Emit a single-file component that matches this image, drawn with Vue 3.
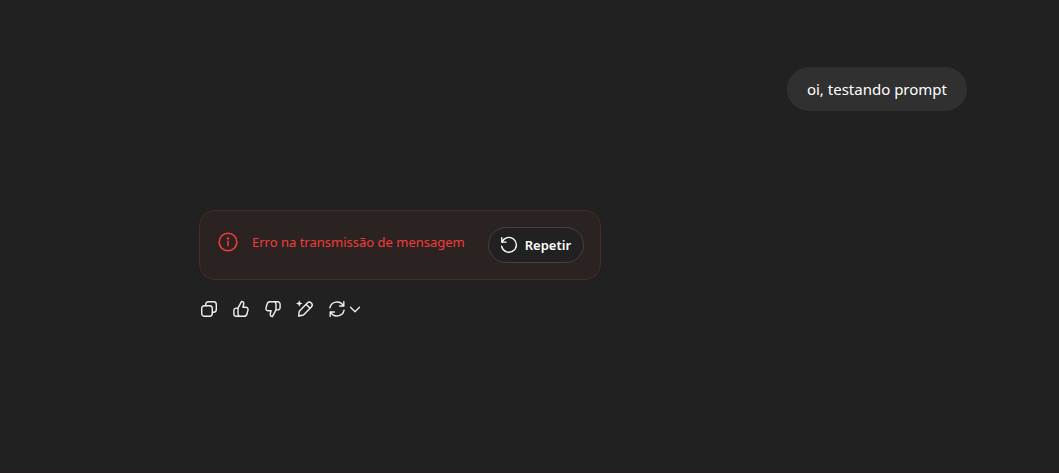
<script setup>
const userMessage = 'oi, testando prompt'
const errorMessage = 'Erro na transmissão de mensagem'

const actions = [
  {
    label: 'Copiar',
    paths: [
      'M5.4 6.7h5.2a2.7 2.7 0 0 1 2.7 2.7v5.2a2.7 2.7 0 0 1-2.7 2.7H5.4a2.7 2.7 0 0 1-2.7-2.7V9.4a2.7 2.7 0 0 1 2.7-2.7z',
      'M6.7 6.7V5.4a2.7 2.7 0 0 1 2.7-2.7h5.2a2.7 2.7 0 0 1 2.7 2.7v5.2a2.7 2.7 0 0 1-2.7 2.7h-1.3',
    ],
  },
  {
    label: 'Boa resposta',
    paths: [
      'M7 9.1 10.6 2.4c1.6 0 2.5 1.3 2.1 2.8L11.9 8.2h2.9c1.6 0 2.6 1.4 2.2 2.9l-1.1 3.9a2.9 2.9 0 0 1-2.8 2.3H5.4a2.5 2.5 0 0 1-2.5-2.5v-3.2a2.5 2.5 0 0 1 2.5-2.5H7z',
      'M7 9.1v5.4c0 1 .4 2 1.1 2.8',
    ],
  },
  {
    label: 'Resposta ruim',
    paths: [
      'M13 10.9 9.4 17.6c-1.6 0-2.5-1.3-2.1-2.8l.8-3H5.2c-1.6 0-2.6-1.4-2.2-2.9L4.1 5a2.9 2.9 0 0 1 2.8-2.3h7.7a2.5 2.5 0 0 1 2.5 2.5v3.2a2.5 2.5 0 0 1-2.5 2.5H13z',
      'M13 10.9V5.5c0-1-.4-2-1.1-2.8',
    ],
  },
  {
    label: 'Editar na tela',
    paths: [
      'M3.7 17l.4-3.8c.1-.7.4-1.3.9-1.8l7.3-7.4a2.8 2.8 0 0 1 4 4L9 15.4c-.5.5-1.1.8-1.8.9z',
      'M11.2 5.4l3.7 3.7',
    ],
    star: 'M4.3 1.2l.9 2.4 2.4.9-2.4.9-.9 2.4-.9-2.4-2.4-.9 2.4-.9z',
  },
]
</script>

<template>
  <main class="chat">
    <div class="thread">
      <article class="user-turn">
        <p class="bubble">{{ userMessage }}</p>
      </article>

      <article class="assistant-turn">
        <div class="error" role="alert">
          <svg class="info" viewBox="0 0 20 20" aria-hidden="true">
            <circle cx="10" cy="10" r="8.8" />
            <path d="M10 9.4v4.2" />
            <circle class="dot" cx="10" cy="6.4" r="1.2" />
          </svg>
          <p class="error-text">{{ errorMessage }}</p>
          <button class="retry" type="button">
            <svg class="icon" viewBox="0 0 20 20" aria-hidden="true">
              <path d="M2.8 2.8v4.3h4.3" />
              <path d="M3.1 7A7.4 7.4 0 1 1 2.7 11.3" />
            </svg>
            <span>Repetir</span>
          </button>
        </div>

        <div class="actions">
          <button
            v-for="action in actions"
            :key="action.label"
            class="action"
            type="button"
            :aria-label="action.label"
          >
            <svg class="icon" viewBox="0 0 20 20" aria-hidden="true">
              <path v-for="d in action.paths" :key="d" :d="d" />
              <path v-if="action.star" class="star" :d="action.star" />
            </svg>
          </button>
          <button class="action wide" type="button" aria-label="Gerar novamente">
            <svg class="icon" viewBox="0 0 20 20" aria-hidden="true">
              <path d="M2.9 8.8A7.2 7.2 0 0 1 16.2 6.6" />
              <path d="M16.8 2.8V7h-4.2" />
              <path d="M17.1 11.2A7.2 7.2 0 0 1 3.8 13.4" />
              <path d="M3.2 17.2V13h4.2" />
            </svg>
            <svg class="chevron" viewBox="0 0 16 16" aria-hidden="true">
              <path d="M3.5 6.2L8 10.7l4.5-4.5" />
            </svg>
          </button>
        </div>
      </article>
    </div>
  </main>
</template>

<style>
body {
  margin: 0;
  background: #212121;
}
</style>

<style scoped>
.chat {
  box-sizing: border-box;
  min-height: 100vh;
  padding: 67px 92px 24px;
  border-bottom: 1px solid #241c21;
  background: #212121;
  color: #fff;
  font-family: "Segoe UI", "Noto Sans", "Open Sans", sans-serif;
}

.thread {
  max-width: 768px;
  margin-left: auto;
}

.user-turn {
  display: flex;
  justify-content: flex-end;
}

.bubble {
  margin: 0;
  padding: 10px 20px;
  border-radius: 22px;
  background: #303030;
  font-size: 15px;
  line-height: 24px;
}

.assistant-turn {
  display: flex;
  flex-direction: column;
  align-items: flex-start;
  gap: 13px;
  margin-top: 99px;
}

.error {
  display: flex;
  align-items: flex-start;
  box-sizing: border-box;
  padding: 16px 16px 16px 18px;
  border: 1px solid #452c29;
  border-radius: 16px;
  background: #2b2321;
}

.info {
  width: 20px;
  height: 20px;
  margin: 5px 14px 0 0;
  fill: none;
  stroke: #f33b3b;
  stroke-width: 1.6;
  stroke-linecap: round;
}

.info .dot {
  fill: #f33b3b;
  stroke: none;
}

.error-text {
  margin: 5px 23px 0 0;
  color: #f33b3b;
  font-size: 13px;
  line-height: 20px;
}

.retry {
  display: flex;
  align-items: center;
  gap: 6px;
  box-sizing: border-box;
  height: 36px;
  padding: 0 12px 0 10px;
  border: 1px solid #424242;
  border-radius: 18px;
  background: #212121;
  color: #fff;
  font-family: inherit;
  font-size: 13px;
  font-weight: 600;
  line-height: 20px;
  cursor: pointer;
}

.actions {
  display: flex;
  margin-left: -6px;
}

.action {
  display: flex;
  align-items: center;
  justify-content: center;
  width: 32px;
  height: 32px;
  padding: 0;
  border: 0;
  border-radius: 8px;
  background: transparent;
  color: #f0f0f0;
  cursor: pointer;
}

.wide {
  width: auto;
  padding: 0 6px;
}

.icon {
  width: 20px;
  height: 20px;
  fill: none;
  stroke: currentColor;
  stroke-width: 1.4;
  stroke-linecap: round;
  stroke-linejoin: round;
}

.icon .star {
  fill: currentColor;
  stroke: none;
}

.chevron {
  width: 16px;
  height: 16px;
  fill: none;
  stroke: currentColor;
  stroke-width: 1.3;
  stroke-linecap: round;
  stroke-linejoin: round;
}
</style>
